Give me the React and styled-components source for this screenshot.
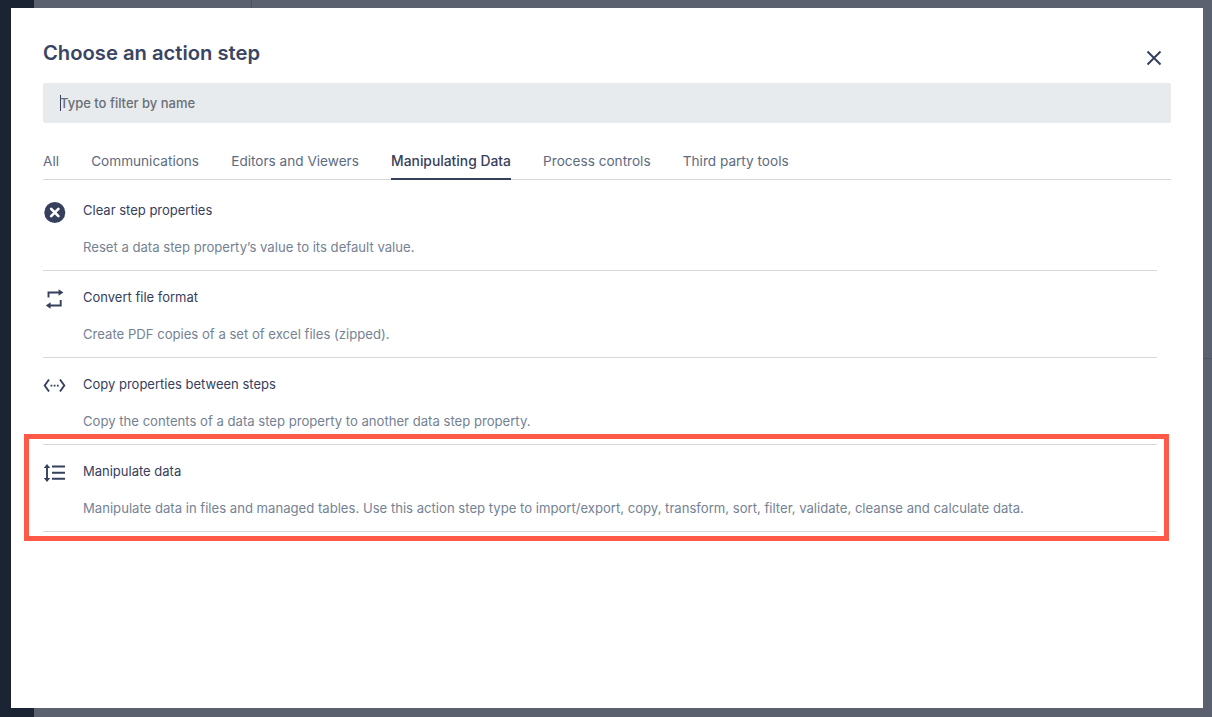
import React from 'react';
import styled, { createGlobalStyle } from 'styled-components';

const GlobalStyle = createGlobalStyle`
  html, body {
    margin: 0;
    padding: 0;
    height: 100%;
    overflow: hidden;
    background: #5b616e;
  }
  * { box-sizing: border-box; }
`;

const Page = styled.div`
  position: relative;
  display: flex;
  width: 1212px;
  height: 717px;
  font-family: Inter, "Liberation Sans", sans-serif;
  background: #5b616e;
`;

const Sidebar = styled.div`
  width: 34px;
  background: #1a2433;
`;

const Backdrop = styled.div`
  flex: 1;
  display: flex;
  flex-direction: column;
`;

const BackdropTop = styled.div`
  height: 359px;
  border-bottom: 1px solid #50555f;
`;

const BackdropColumn = styled.div`
  width: 218px;
  height: 358px;
  border-right: 1px solid #4c515b;
`;

const Modal = styled.div`
  position: absolute;
  left: 11px;
  top: 8px;
  width: 1192px;
  height: 700px;
  background: #fff;
  padding: 0 32px;
  display: flex;
  flex-direction: column;
`;

const Header = styled.div`
  display: flex;
  justify-content: space-between;
  height: 75px;
`;

const Title = styled.h1`
  margin: 31px 0 0;
  font-size: 20.2px;
  line-height: 28px;
  font-weight: 600;
  color: #3a4563;
`;

const CloseButton = styled.button`
  border: 0;
  padding: 0;
  margin: 41px 8px 0 0;
  width: 18px;
  height: 18px;
  background: none;
  color: #36405c;
  display: flex;
`;

const SearchBar = styled.div`
  height: 40px;
  background: #e8ebee;
  border-radius: 2px;
  padding-left: 17px;
  display: flex;
  align-items: center;
  font-size: 13px;
  font-weight: 500;
  color: #6b6f76;
`;

const Caret = styled.span`
  width: 1px;
  height: 16px;
  background: #36405c;
  margin-right: -1px;
`;

const Tabs = styled.div`
  display: flex;
  gap: 32.2px;
  margin-top: 19px;
  height: 38px;
  border-bottom: 1px solid #d5d7da;
`;

const Tab = styled.div`
  height: 38px;
  padding-top: 11px;
  font-size: ${p => (p.$active ? '13.85px' : '13.6px')};
  line-height: 17px;
  color: ${p => (p.$active ? '#36405c' : '#5c6b80')};
  font-weight: ${p => (p.$active ? 500 : 400)};
  border-bottom: ${p => (p.$active ? '2px solid #36405c' : 'none')};
`;

const List = styled.div`
  width: 1114px;
  padding-top: 4px;
  display: flex;
  flex-direction: column;
`;

const Row = styled.div`
  height: 87px;
  display: grid;
  grid-template-columns: 40px 1fr;
  grid-template-rows: 56px 1fr;
  border-bottom: 1px solid #d5d7da;
`;

const RowIcon = styled.div`
  padding: 17px 0 0 0;
  color: #36405c;
  display: flex;
`;

const RowTitle = styled.div`
  padding-top: 18px;
  font-size: 13px;
  line-height: 17px;
  color: #36405c;
`;

const RowText = styled.div`
  grid-column: 2;
  margin-top: -1px;
  font-size: 13.11px;
  line-height: 17px;
  color: #748294;
`;

const Highlight = styled.div`
  position: absolute;
  left: 24px;
  top: 434px;
  width: 1145px;
  height: 107px;
  border: 5px solid #ff5a47;
  pointer-events: none;
`;

const ClearIcon = () => (
  <svg width="24" height="23" viewBox="0 0 24 23">
    <circle cx="11.8" cy="11.5" r="10.5" fill="currentColor" />
    <path d="M8.2 7.9l7.2 7.2M15.4 7.9l-7.2 7.2" stroke="#fff" strokeWidth="2.7" strokeLinecap="round" />
  </svg>
);

const ConvertIcon = () => (
  <svg width="24" height="22" viewBox="0 0 24 22">
    <path d="M5.5 9.5v-5H17M17.7 12v5.5H6" fill="none" stroke="currentColor" strokeWidth="1.9" />
    <path d="M15.6 1.2l4.8 3.3-4.8 3.3zM7.6 14.2l-4.8 3.3 4.8 3.3z" fill="currentColor" />
  </svg>
);

const CopyIcon = () => (
  <svg width="24" height="22" viewBox="0 0 24 22" fill="none" stroke="currentColor" strokeWidth="1.9">
    <path d="M6 4.5l-4.3 6 4.3 6" />
    <path d="M17 4.5l4.3 6-4.3 6" />
    <path d="M7.5 10.6h1.8M10.7 10.6h1.8M13.9 10.6h1.8" strokeWidth="1.6" />
  </svg>
);

const ManipulateIcon = () => (
  <svg width="24" height="22" viewBox="0 0 24 22">
    <path d="M4 4v14" fill="none" stroke="currentColor" strokeWidth="1.9" />
    <path d="M.8 6L4 2l3.2 4zM.8 16L4 20l3.2-4z" fill="currentColor" />
    <path d="M9 4.5h13M9 10.7h13M9 16.7h13" fill="none" stroke="currentColor" strokeWidth="2" />
  </svg>
);

const steps = [
  { title: 'Clear step properties', text: 'Reset a data step property’s value to its default value.', Icon: ClearIcon },
  { title: 'Convert file format', text: 'Create PDF copies of a set of excel files (zipped).', Icon: ConvertIcon },
  { title: 'Copy properties between steps', text: 'Copy the contents of a data step property to another data step property.', Icon: CopyIcon },
  { title: 'Manipulate data', text: 'Manipulate data in files and managed tables. Use this action step type to import/export, copy, transform, sort, filter, validate, cleanse and calculate data.', Icon: ManipulateIcon },
];

const tabs = ['All', 'Communications', 'Editors and Viewers', 'Manipulating Data', 'Process controls', 'Third party tools'];

export default function App() {
  return (
    <Page>
      <GlobalStyle />
      <Sidebar />
      <Backdrop>
        <BackdropTop>
          <BackdropColumn />
        </BackdropTop>
      </Backdrop>
      <Modal>
        <Header>
          <Title>Choose an action step</Title>
          <CloseButton>
            <svg width="18" height="18" viewBox="0 0 18 18" fill="none" stroke="currentColor" strokeWidth="2">
              <path d="M2.5 2.5l13 13M15.5 2.5l-13 13" />
            </svg>
          </CloseButton>
        </Header>
        <SearchBar>
          <Caret />
          Type to filter by name
        </SearchBar>
        <Tabs>
          {tabs.map(t => (
            <Tab key={t} $active={t === 'Manipulating Data'}>{t}</Tab>
          ))}
        </Tabs>
        <List>
          {steps.map(({ title, text, Icon }) => (
            <Row key={title}>
              <RowIcon><Icon /></RowIcon>
              <RowTitle>{title}</RowTitle>
              <RowText>{text}</RowText>
            </Row>
          ))}
        </List>
      </Modal>
      <Highlight />
    </Page>
  );
}
